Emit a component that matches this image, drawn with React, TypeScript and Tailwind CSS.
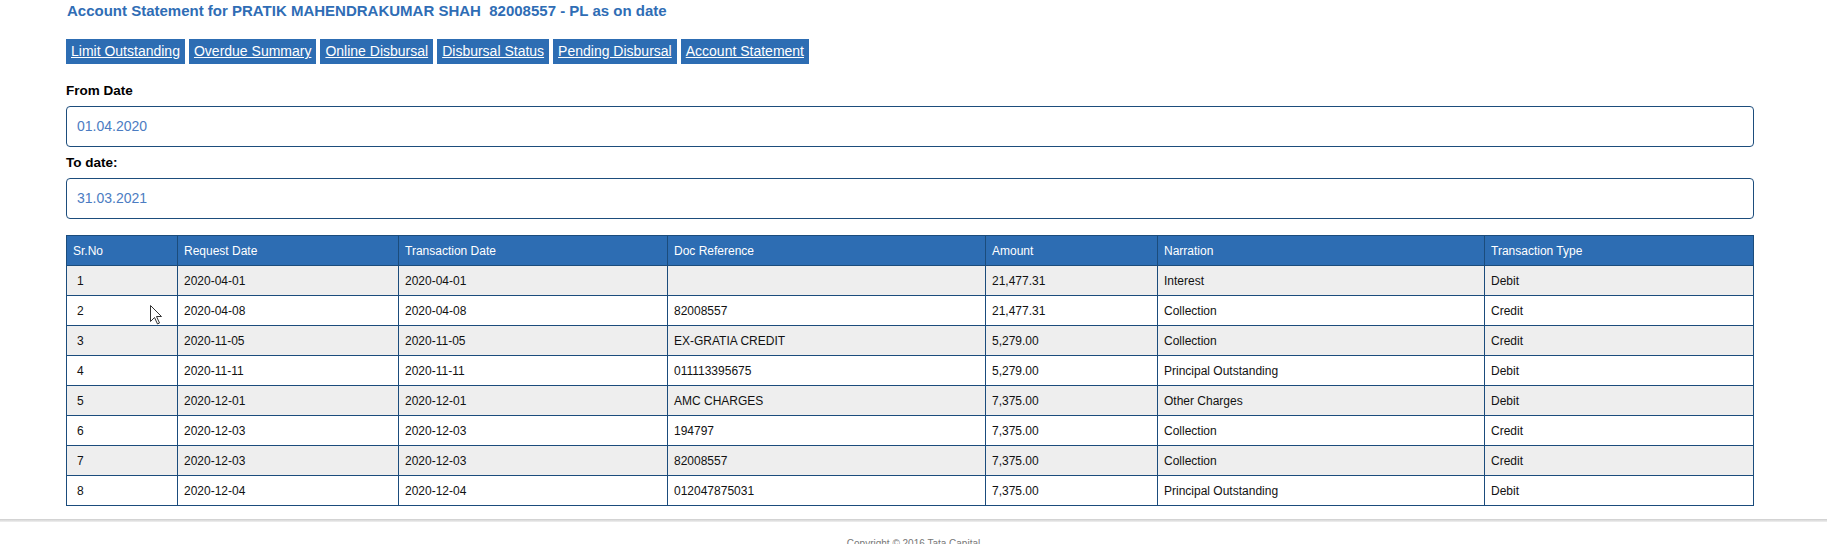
import React from "react";

const tabs = [
  "Limit Outstanding",
  "Overdue Summary",
  "Online Disbursal",
  "Disbursal Status",
  "Pending Disbursal",
  "Account Statement",
];

const rows = [
  ["1", "2020-04-01", "2020-04-01", "", "21,477.31", "Interest", "Debit"],
  ["2", "2020-04-08", "2020-04-08", "82008557", "21,477.31", "Collection", "Credit"],
  ["3", "2020-11-05", "2020-11-05", "EX-GRATIA CREDIT", "5,279.00", "Collection", "Credit"],
  ["4", "2020-11-11", "2020-11-11", "011113395675", "5,279.00", "Principal Outstanding", "Debit"],
  ["5", "2020-12-01", "2020-12-01", "AMC CHARGES", "7,375.00", "Other Charges", "Debit"],
  ["6", "2020-12-03", "2020-12-03", "194797", "7,375.00", "Collection", "Credit"],
  ["7", "2020-12-03", "2020-12-03", "82008557", "7,375.00", "Collection", "Credit"],
  ["8", "2020-12-04", "2020-12-04", "012047875031", "7,375.00", "Principal Outstanding", "Debit"],
];

const headers = [
  { t: "Sr.No", w: "w-[111px]" },
  { t: "Request Date", w: "w-[221px]" },
  { t: "Transaction Date", w: "w-[269px]" },
  { t: "Doc Reference", w: "w-[318px]" },
  { t: "Amount", w: "w-[172px]" },
  { t: "Narration", w: "w-[327px]" },
  { t: "Transaction Type", w: "w-[269px]" },
];

export default function App() {
  return (
    <div className="relative h-[544px] overflow-hidden bg-white font-['Liberation_Sans',Arial,sans-serif]">
      <div className="pl-[66px]">
        <div className="w-[1688px]">
          <h1 className="pt-[2px] pl-[1px] text-[15px] leading-[18px] font-bold text-[#2f6db5]">
            Account Statement for PRATIK MAHENDRAKUMAR SHAH{"\u00a0 "}82008557 - PL as on date
          </h1>

          <div className="mt-[19px] flex gap-[4px]">
            {tabs.map((t) => (
              <a
                key={t}
                href="#"
                className="bg-[#2d6db3] px-[5px] py-[4px] text-[14px] leading-[17px] text-white underline"
              >
                {t}
              </a>
            ))}
          </div>

          <label className="mt-[19px] block text-[13.5px] leading-[16px] font-bold text-black">
            From Date
          </label>
          <div className="mt-[7px] flex h-[41px] items-center rounded-[4px] border border-[#1d4d7c] pl-[10px] text-[14px] text-[#4c7cc2]">
            01.04.2020
          </div>

          <label className="mt-[8px] block text-[13.5px] leading-[16px] font-bold text-black">
            To date:
          </label>
          <div className="mt-[7px] flex h-[41px] items-center rounded-[4px] border border-[#1d4d7c] pl-[10px] text-[14px] text-[#4c7cc2]">
            31.03.2021
          </div>

          <table className="mt-[16px] w-[1688px] table-fixed border-collapse border border-[#1b4c7c] text-[12px]">
            <thead>
              <tr className="h-[30px] bg-[#2d6db3] text-white">
                {headers.map((h) => (
                  <th
                    key={h.t}
                    className={`${h.w} border border-[#1b4c7c] px-[6px] text-left font-normal`}
                  >
                    {h.t}
                  </th>
                ))}
              </tr>
            </thead>
            <tbody>
              {rows.map((r, i) => (
                <tr
                  key={i}
                  className={`h-[30px] ${i % 2 === 0 ? "bg-[#eeeeee]" : "bg-white"} text-[#111]`}
                >
                  {r.map((c, j) => (
                    <td
                      key={j}
                      className={`border border-[#1b4c7c] ${j === 0 ? "pl-[10px] pr-[6px]" : "px-[6px]"}`}
                    >
                      {c}
                    </td>
                  ))}
                </tr>
              ))}
            </tbody>
          </table>
        </div>
      </div>

      <div className="mt-[13px] h-[3px] bg-linear-to-b from-[#cdcdcd] to-[#f0f0f0]" />
      <div className="mt-[16px] text-center text-[10px] leading-[12px] text-[#777]">
        Copyright © 2016 Tata Capital
      </div>

      <svg
        className="absolute left-[150px] top-[305px]"
        width="13"
        height="20"
        viewBox="0 0 13 20"
      >
        <polygon
          points="0.5,0.5 0.5,16.5 4.5,12.5 7.5,19 9.5,18 6.5,11.5 11.5,11.5"
          fill="white"
          stroke="#333"
          strokeWidth="1"
          strokeLinejoin="miter"
        />
      </svg>
    </div>
  );
}
